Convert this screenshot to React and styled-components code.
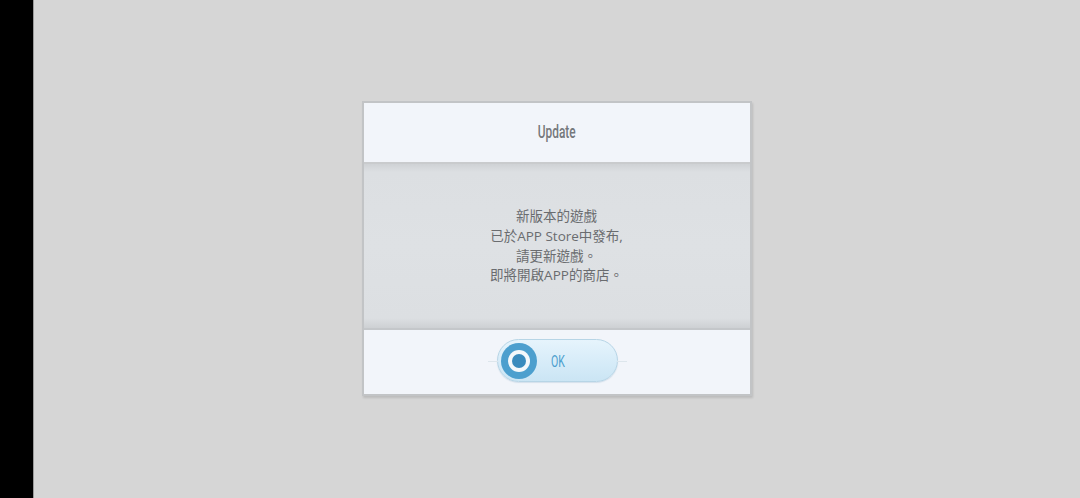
import React from 'react';
import styled, { createGlobalStyle } from 'styled-components';

const GlobalStyle = createGlobalStyle`
  html, body {
    margin: 0;
    padding: 0;
    width: 1080px;
    height: 498px;
    overflow: hidden;
    font-family: "Open Sans", "Noto Sans CJK TC", sans-serif;
  }
`;

const Screen = styled.div`
  display: flex;
  width: 1080px;
  height: 498px;
  background: #d6d6d6;
`;

const SideStrip = styled.div`
  width: 33px;
  flex-shrink: 0;
  background: #000;
  border-right: 1px solid #9a9a9a;
`;

const Stage = styled.div`
  flex: 1;
  display: flex;
  align-items: center;
  justify-content: center;
  padding-right: 1px;
  padding-bottom: 2px;
`;

const Dialog = styled.div`
  width: 386px;
  display: flex;
  flex-direction: column;
  border: 2px solid #c2c4c6;
  box-shadow: 1px 2px 2px rgba(0, 0, 0, 0.12);
  background: #f2f5fa;
`;

const Header = styled.div`
  height: 58px;
  display: flex;
  align-items: center;
  justify-content: center;
  padding-bottom: 1px;
  background: #f2f5fa;
  border-bottom: 2px solid #c9cbcd;
`;

const Title = styled.h1`
  margin: 0;
  font-family: Roboto, sans-serif;
  font-weight: 500;
  font-size: 18px;
  color: #75787c;
  transform: scaleX(0.66);
`;

const Body = styled.div`
  height: 164px;
  display: flex;
  align-items: center;
  justify-content: center;
  background: linear-gradient(
    to bottom,
    #cfd2d5 0px,
    #dcdfe2 8px,
    #dee1e4 50%,
    #dcdfe2 calc(100% - 10px),
    #cdd0d3 100%
  );
  border-bottom: 2px solid #c4c7ca;
`;

const Message = styled.p`
  margin: 2px 0 0;
  text-align: center;
  font-family: "Open Sans", "Noto Sans CJK TC", sans-serif;
  font-size: 13.5px;
  line-height: 19.7px;
  color: #6a6c6f;
`;

const Footer = styled.div`
  height: 64px;
  display: flex;
  align-items: center;
  justify-content: center;
  background: #f2f5fa;
`;

const OkButton = styled.button`
  position: relative;
  display: flex;
  align-items: center;
  width: 121px;
  height: 43px;
  padding: 0 0 0 3px;
  margin-left: 1px;
  margin-top: -2px;
  border: 1px solid #b7d5e6;
  border-radius: 22px;
  background: linear-gradient(to bottom, #e6f4fc 0%, #d5ebf8 60%, #cbe5f4 100%);
  box-shadow: 0 1px 1px rgba(120, 160, 190, 0.25);
  cursor: pointer;

  &::before,
  &::after {
    content: "";
    position: absolute;
    top: 50%;
    width: 10px;
    height: 1px;
    background: #dde6ec;
  }
  &::before { left: -10px; }
  &::after { right: -10px; }
`;

const Knob = styled.span`
  width: 36px;
  height: 36px;
  border-radius: 50%;
  background: #4c9fce;
  display: flex;
  align-items: center;
  justify-content: center;
  flex-shrink: 0;
`;

const KnobRing = styled.span`
  width: 22px;
  height: 22px;
  border-radius: 50%;
  background: #f4f8fb;
  display: flex;
  align-items: center;
  justify-content: center;
`;

const KnobDot = styled.span`
  width: 14px;
  height: 14px;
  border-radius: 50%;
  background: #3a8bbd;
`;

const OkLabel = styled.span`
  margin-left: 14px;
  font-family: Roboto, sans-serif;
  font-size: 17px;
  color: #4c9fce;
  transform: scaleX(0.62);
  transform-origin: left center;
`;

export default function App() {
  return (
    <>
      <GlobalStyle />
      <Screen>
        <SideStrip />
        <Stage>
          <Dialog>
            <Header>
              <Title>Update</Title>
            </Header>
            <Body>
              <Message>
                新版本的遊戲
                <br />
                已於APP Store中發布,
                <br />
                請更新遊戲。
                <br />
                即將開啟APP的商店。
              </Message>
            </Body>
            <Footer>
              <OkButton>
                <Knob>
                  <KnobRing>
                    <KnobDot />
                  </KnobRing>
                </Knob>
                <OkLabel>OK</OkLabel>
              </OkButton>
            </Footer>
          </Dialog>
        </Stage>
      </Screen>
    </>
  );
}
